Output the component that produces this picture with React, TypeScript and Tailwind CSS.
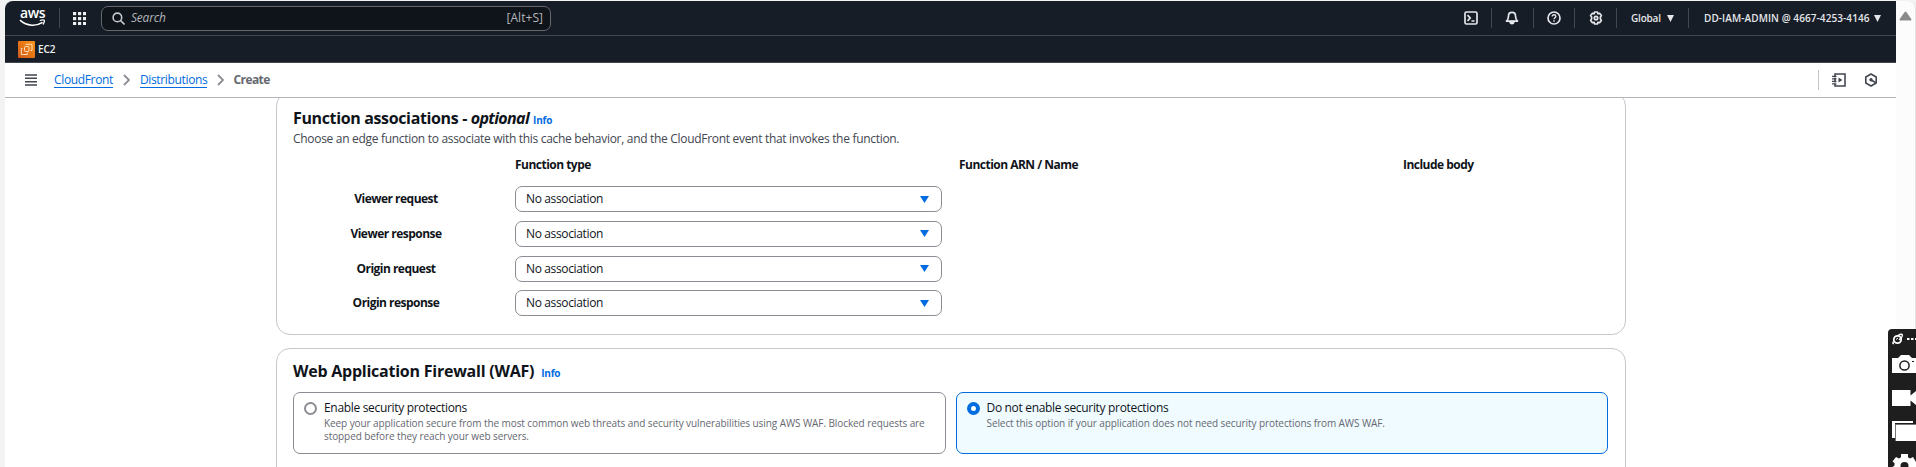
import type { ReactNode } from "react";

const associations = ["Viewer request", "Viewer response", "Origin request", "Origin response"];

function Caret({ className }: { className: string }) {
  return (
    <svg viewBox="0 0 8 8" className={className} preserveAspectRatio="none">
      <path d="M0 0h8L4 8z" fill="currentColor" />
    </svg>
  );
}

function Chevron() {
  return (
    <svg viewBox="0 0 7 12" className="h-3 w-[7px] shrink-0 fill-none stroke-[#8c8c94] stroke-[1.8]">
      <path d="M1 1l5 5-5 5" />
    </svg>
  );
}

function Divider({ className = "" }: { className?: string }) {
  return <div className={`h-5 w-px shrink-0 bg-[#424650] ${className}`} />;
}

function AwsLogo() {
  return (
    <div className="flex h-[18px] w-[27px] shrink-0 flex-col items-center">
      <span className="h-[10px] font-['Open_Sans',sans-serif] text-[14px] leading-[8px] font-semibold tracking-[-0.4px] text-white">aws</span>
      <svg viewBox="0 0 27 8" className="h-2 w-[27px] fill-none stroke-white">
        <path d="M1 1.2C8 7.6 17.5 7.4 23.5 3.4" strokeWidth="1.6" />
        <path d="M20.8 1.5c2-.7 3.7-.8 4.4-.3.4.9-.2 2.8-1.3 4.3" strokeWidth="1.3" />
      </svg>
    </div>
  );
}

function Ec2Icon() {
  return (
    <svg viewBox="0 0 17 17" className="h-[17px] w-[17px] shrink-0">
      <defs>
        <linearGradient id="ec2" x1="0" y1="1" x2="1" y2="0">
          <stop offset="0" stopColor="#d0581a" />
          <stop offset="1" stopColor="#f99412" />
        </linearGradient>
      </defs>
      <rect width="17" height="17" rx="1" fill="url(#ec2)" />
      <g fill="none" stroke="#ffe9d2" strokeWidth="0.9">
        <rect x="6.5" y="5.5" width="4.5" height="5" rx="1" />
        <path d="M7.5 3.300h6.500v6.200h-1.500M4.500 7.500H3.300v6h6v-1.700" />
      </g>
    </svg>
  );
}

function TopIcon({ children }: { children: ReactNode }) {
  return (
    <svg viewBox="0 0 14 14" className="h-3.5 w-3.5 shrink-0 fill-none stroke-[#e4e6ea] stroke-[1.7]">
      {children}
    </svg>
  );
}

function TopBar() {
  return (
    <header className="flex h-[35px] shrink-0 items-center border-b border-[#424650] bg-[#161d26] pr-[15px] pb-2 pl-3.5">
      <div className="flex flex-1 items-center pt-2">
        <AwsLogo />
        <Divider className="ml-[13px]" />
        <svg viewBox="0 0 13 13" className="ml-[13px] h-[13px] w-[13px] fill-[#f0f1f3]">
          {[0, 5, 10].map((y) => [0, 5, 10].map((x) => <rect key={`${x}-${y}`} x={x} y={y} width="3.2" height="3.2" />))}
        </svg>
        <div className="ml-[15px] flex h-[25px] w-[450px] items-center rounded-[7px] border border-[#656871] bg-[#0f141a] pr-[7px] pl-2.5">
          <svg viewBox="0 0 13 13" className="h-[13px] w-[13px] fill-none stroke-[#c6c6cd] stroke-[1.6]">
            <circle cx="5.4" cy="5.4" r="4.3" />
            <path d="M8.5 8.5l4 4" />
          </svg>
          <span className="ml-1.5 text-[12px] tracking-[-0.2px] text-[#b4b4bb] italic">Search</span>
          <span className="ml-auto text-[12px] tracking-[0.05px] text-[#b4b4bb]">[Alt+S]</span>
        </div>
        <div className="ml-auto flex items-center text-[#e4e6ea]">
          <TopIcon>
            <rect x="1" y="1" width="12" height="12" rx="1.5" />
            <path d="M3.5 4.200L6.200 7 3.500 9.800M7.500 10h3" />
          </TopIcon>
          <Divider className="mx-[13px]" />
          <TopIcon>
            <path d="M7 1.300c-2.200 0-3.500 1.600-3.500 3.600 0 3-.7 3.900-2 5.200h11c-1.300-1.300-2-2.200-2-5.200 0-2-1.300-3.600-3.500-3.600z" strokeLinejoin="round" />
            <path d="M5 10.600c.2 1.400 1 2 2 2s1.800-.6 2-2z" fill="currentColor" />
          </TopIcon>
          <Divider className="mx-[13.5px]" />
          <TopIcon>
            <circle cx="7" cy="7" r="6" />
            <path d="M5.200 5.600c0-1.100.8-1.800 1.800-1.800s1.800.7 1.800 1.700c0 1.200-1.800 1.300-1.800 2.700M7 9.300v1.400" strokeWidth="1.4" />
          </TopIcon>
          <Divider className="mr-[14px] ml-[13px]" />
          <TopIcon>
            <path d="M5.600 1h2.800l.5 1.700 1.700-.4 1.800 2.300-1 1.300v2.200l1 1.300-1.800 2.300-1.700-.4-.5 1.700H5.600l-.5-1.700-1.700.4-1.800-2.300 1-1.300V5.900l-1-1.300 1.800-2.300 1.700.4z" strokeLinejoin="round" />
            <circle cx="7" cy="7" r="1.7" />
          </TopIcon>
          <Divider className="mr-[14px] ml-[13px]" />
          <span className="w-[31px] text-[10px] font-semibold tracking-[-0.2px] whitespace-nowrap">Global</span>
          <Caret className="ml-[5px] h-[7px] w-[7px]" />
          <Divider className="ml-[14px]" />
          <span className="ml-[15px] w-[164px] text-[10px] font-semibold tracking-[0.08px] whitespace-nowrap">DD-IAM-ADMIN @ 4667-4253-4146</span>
          <Caret className="ml-[6px] h-[7px] w-[7px]" />
        </div>
      </div>
    </header>
  );
}

function Breadcrumbs() {
  const link = "border-b border-[#006ce0] text-[#006ce0] leading-[15px]";
  return (
    <nav className="flex h-[35px] shrink-0 items-center border-b border-[#b4b4bb] bg-white pr-[18px] pl-5 text-[12px]">
      <svg viewBox="0 0 12 12" className="h-3 w-3 fill-none stroke-[#424650] stroke-[1.5]">
        <path d="M0 1h12M0 4.300h12M0 7.700h12M0 11h12" />
      </svg>
      <span className={`ml-[17px] tracking-[-0.35px] ${link}`}>CloudFront</span>
      <span className="flex w-[27px] justify-center"><Chevron /></span>
      <span className={`tracking-[-0.35px] ${link}`}>Distributions</span>
      <span className="flex w-[26px] justify-center"><Chevron /></span>
      <span className="font-bold tracking-[-0.55px] text-[#656871]">Create</span>
      <div className="ml-auto h-5 w-px bg-[#c6c6cd]" />
      <svg viewBox="0 0 14 14" className="ml-[13px] h-3.5 w-3.5 fill-none stroke-[#424650] stroke-[1.6]">
        <path d="M3 3V1h10v12H3v-2M3 4.500v5" />
        <path d="M0 3.300h4.500M0 5.800h4.500M0 8.300h4.500M0 10.800h4.500" strokeWidth="1.2" />
        <path d="M6.500 4.500v5L10.500 7z" fill="#424650" stroke="none" />
      </svg>
      <svg viewBox="0 0 14 14" className="ml-[18px] h-3.5 w-3.5 fill-none stroke-[#424650] stroke-[1.6]">
        <path d="M7 1l5.200 3v6L7 13l-5.200-3V4z" strokeLinejoin="round" />
        <circle cx="7" cy="6.8" r="1.7" fill="#424650" stroke="none" />
        <path d="M7 7l4.500 2.500" />
      </svg>
    </nav>
  );
}

function Info() {
  return <span className="text-[10px] font-bold tracking-[-0.2px] text-[#006ce0]">Info</span>;
}

function FunctionAssociations() {
  const head = "text-[12px] leading-4 font-[680] tracking-[-0.52px]";
  return (
    <section className="-mt-1.5 h-[243px] shrink-0 rounded-[14px] border border-[#c6c6cd] bg-white px-4 pt-[15px]">
      <h2 className="flex h-5 items-baseline text-[16px] leading-5 font-bold tracking-[-0.36px] whitespace-pre">
        <span>Function associations - </span>
        <i className="tracking-[-0.65px]">optional</i>
        <span className="ml-1"><Info /></span>
      </h2>
      <p className="mt-[3px] text-[12px] leading-4 tracking-[-0.305px] text-[#424650]">
        Choose an edge function to associate with this cache behavior, and the CloudFront event that invokes the function.
      </p>
      <div className="mt-2.5 grid grid-cols-[206px_428px_428px_206px] gap-x-4">
        <span className={`col-start-2 ${head}`}>Function type</span>
        <span className={head}>Function ARN / Name</span>
        <span className={head}>Include body</span>
      </div>
      <div className="mt-[13px] flex flex-col gap-[8.8px]">
        {associations.map((name) => (
          <div key={name} className="grid grid-cols-[206px_427px] items-center gap-x-4">
            <span className={`text-center ${head}`}>{name}</span>
            <div className="flex h-[26px] items-center justify-between rounded-[7px] border border-[#8c8c94] pr-3 pl-2.5 text-[12px] tracking-[-0.36px]">
              No association
              <Caret className="h-[7px] w-[9px] text-[#006ce0]" />
            </div>
          </div>
        ))}
      </div>
    </section>
  );
}

function Tile({ title, text, selected = false }: { title: string; text: string; selected?: boolean }) {
  return (
    <div className={`flex h-[62px] rounded-[7px] border pt-[7px] pl-2.5 ${selected ? "border-[#006ce0] bg-[#f0fbff]" : "border-[#8c8c94] bg-white"}`}>
      <div className={`mt-[2px] h-[13px] w-[13px] shrink-0 rounded-full bg-white ${selected ? "border-4 border-[#006ce0]" : "border-2 border-[#8c8c94]"}`} />
      <div className="ml-[7px]">
        <div className="text-[12px] leading-4 tracking-[-0.32px]">{title}</div>
        <div className="mt-px w-[610px] text-[10px] leading-[13px] tracking-[-0.085px] text-[#656871]">{text}</div>
      </div>
    </div>
  );
}

function Firewall() {
  return (
    <section className="mt-[13px] h-36 shrink-0 rounded-[14px] border border-[#c6c6cd] bg-white pt-3 pr-[17px] pl-4">
      <h2 className="flex h-5 items-baseline text-[16px] leading-5 font-bold tracking-[-0.24px]">
        Web Application Firewall (WAF)
        <span className="ml-[7px]"><Info /></span>
      </h2>
      <div className="mt-[11px] grid grid-cols-2 gap-x-2.5">
        <Tile
          title="Enable security protections"
          text="Keep your application secure from the most common web threats and security vulnerabilities using AWS WAF. Blocked requests are stopped before they reach your web servers."
        />
        <Tile
          selected
          title="Do not enable security protections"
          text="Select this option if your application does not need security protections from AWS WAF."
        />
      </div>
    </section>
  );
}

function CaptureToolbar() {
  return (
    <div className="absolute top-[329px] right-0 h-[138px] w-7 overflow-hidden rounded-tl-[4px] bg-[#1e1e1e]">
      <svg viewBox="0 0 28 138" className="h-[138px] w-7">
        <g fill="none" stroke="#fff">
          <circle cx="9.5" cy="10.5" r="3.7" strokeWidth="1.8" />
          <path d="M6 14.500c-1.500.5-1.500-1 0-2.500M10 6.500c2-1.500 4-1.700 4.300-.8.3 1-1 3.300-3.300 5.200" strokeWidth="1.4" />
          <path d="M8 10.500l2-1.500" />
        </g>
        <path d="M19 9h2.500v2H19zM23 9h2.500v2H23zM27 9h1v2h-1z" fill="#fff" />
        <path d="M4 29h6l3-3h8l3 3h4v15H4z" fill="#fff" />
        <circle cx="16.5" cy="36.5" r="4.6" fill="none" stroke="#1e1e1e" strokeWidth="1.5" />
        <path d="M24 32h2v1h-2z" fill="#1e1e1e" />
        <path d="M4 61h18.500v5.500L28 62v14l-5.500-4.500V77H4z" fill="#fff" />
        <path d="M4 92h21v2H7v15H4z" fill="#fff" />
        <path d="M8 95h20v17H8z" fill="#fff" />
        <path d="M7.500 112V95.500H28" fill="none" stroke="#77777a" />
        <path d="M13 125h7v3.200l2 1.200 3-1.400 3 5v10H4.500v-5l2-1.500v-2.500l-2-1.500L8 128l3 1.400 2-1.200z" fill="#fff" />
        <circle cx="16.5" cy="137" r="4" fill="#1e1e1e" />
      </svg>
    </div>
  );
}

export default function App() {
  return (
    <div className="relative flex h-[467px] w-full overflow-hidden bg-[#f3f3f3] pt-px pl-[5px] font-['Open_Sans','Noto_Sans',sans-serif] text-[#0f141a]">
      <div className="flex min-w-0 flex-1 flex-col overflow-hidden rounded-tl-[8px] bg-white">
        <TopBar />
        <div className="flex h-[27px] shrink-0 items-center gap-[3px] border-b border-[#424650] bg-[#161d26] pl-[13px]">
          <Ec2Icon />
          <span className="text-[10px] font-semibold tracking-[-0.05px] text-[#f0f1f3]">EC2</span>
        </div>
        <Breadcrumbs />
        <main className="flex flex-1 flex-col overflow-hidden pr-[270px] pl-[271px]">
          <FunctionAssociations />
          <Firewall />
        </main>
      </div>
      <div className="flex w-5 shrink-0 justify-center rounded-tr-[8px] border-r border-[#e2e2e2] bg-[#fcfcfc] pt-2.5">
        <svg viewBox="0 0 13 10" className="h-2.5 w-[13px]">
          <path d="M6.5 1.500L11.500 8.500H1.500z" fill="#8b8b8b" stroke="#8b8b8b" strokeWidth="2" strokeLinejoin="round" />
        </svg>
      </div>
      <CaptureToolbar />
    </div>
  );
}
